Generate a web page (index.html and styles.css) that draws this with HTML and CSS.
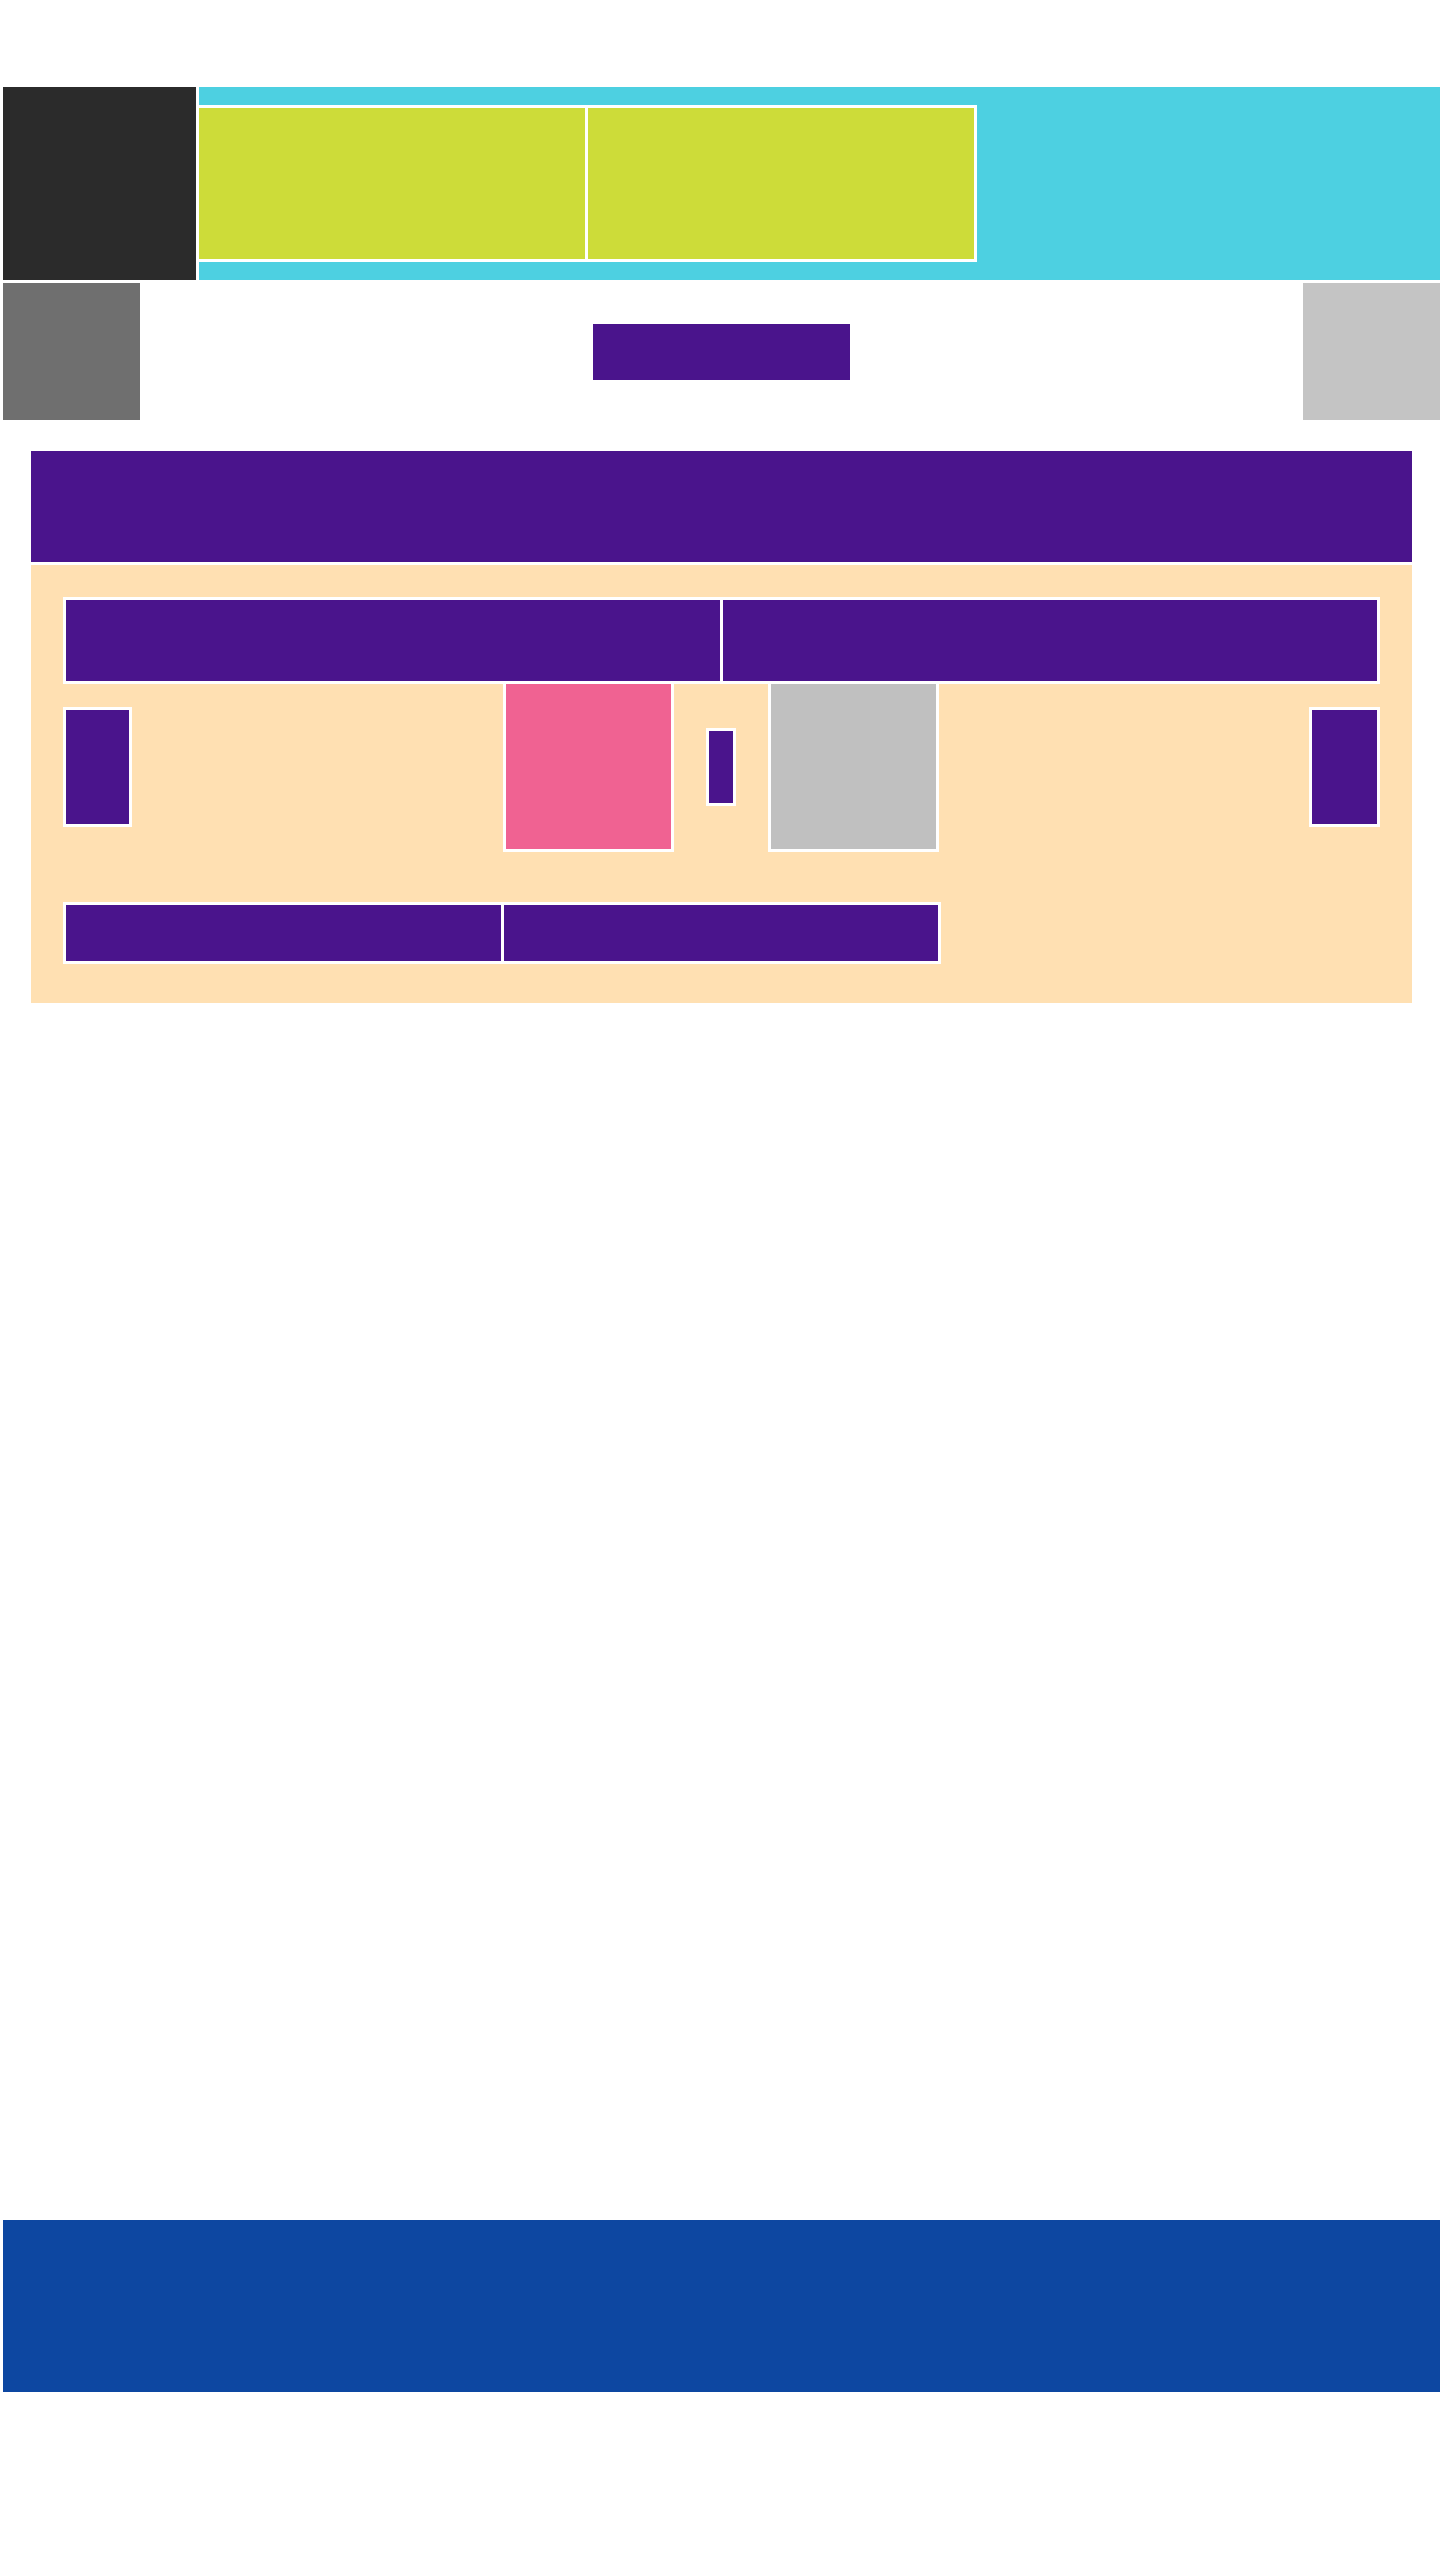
FILE: index.html
```html
<html>
<head>
    <title>Layout</title>
    <meta http-equiv="Content-Type" content="text/html; charset=utf-8" />
    <link rel="stylesheet" href="styles.css">
</head>
<body>
<div class="page">

    <header class="masthead">
        <div class="logo"></div>
        <div class="banner">
            <div class="promo"></div>
            <div class="promo"></div>
        </div>
    </header>

    <nav class="navbar">
        <div class="nav-left"></div>
        <a class="nav-btn" href="#"></a>
        <div class="nav-right"></div>
    </nav>

    <main class="content">
        <section class="panel">
            <div class="panel-head"></div>
            <div class="panel-body">
                <div class="tabs">
                    <div class="tab"></div>
                    <div class="tab"></div>
                </div>
                <div class="row">
                    <div class="side"></div>
                    <div class="group">
                        <div class="tile pink"></div>
                        <div class="pip"></div>
                        <div class="tile silver"></div>
                    </div>
                    <div class="side side-right"></div>
                </div>
                <div class="tabs tabs-short">
                    <div class="tab"></div>
                    <div class="tab"></div>
                </div>
            </div>
        </section>
    </main>

    <footer class="footer"></footer>

</div>
</body>
</html>
```
FILE: styles.css
```css
* {
    box-sizing: border-box;
}

body {
    margin: 0;
    background: #fff;
    font-family: "Liberation Sans", sans-serif;
}

.page {
    padding: 87px 0 0 3px;
}

/* top header */
.masthead {
    display: flex;
    gap: 3px;
    height: 193px;
}

.logo {
    width: 193px;
    background: #2b2b2b;
}

.banner {
    flex: 1;
    display: flex;
    padding: 18px 0;
    background: #4dd0e1;
}

.promo {
    width: 389px;
    height: 157px;
    background: #cddc39;
    border: 3px solid #fff;
    border-left: 0;
}

.promo:first-child {
    width: 392px;
    margin-left: -3px;
    border-left: 3px solid #fff;
}

/* nav */
.navbar {
    display: flex;
    justify-content: space-between;
    align-items: center;
    margin-top: 3px;
    height: 137px;
}

.nav-left, .nav-right {
    width: 137px;
    height: 137px;
}

.nav-left {
    background: #6f6f6f;
}

.nav-right {
    background: #c4c4c4;
}

.nav-btn {
    display: block;
    width: 257px;
    height: 56px;
    background: #4a148c;
}

/* main panel */
.content {
    margin: 31px 28px 0;
    min-height: 1769px;
}

.panel-head {
    height: 114px;
    background: #4a148c;
    border-bottom: 3px solid #fff;
}

.panel-body {
    padding: 32px 32px 39px;
    background: #ffe0b2;
}

.tabs {
    display: flex;
}

.tab {
    flex: 1;
    height: 87px;
    background: #4a148c;
    border: 3px solid #fff;
}

.tab + .tab {
    border-left: 0;
}

.tabs-short {
    width: 66.67%;
}

.tabs-short .tab {
    height: 62px;
}

.row {
    display: flex;
    justify-content: space-between;
    align-items: center;
    margin-top: -3px;
    margin-bottom: 50px;
}

.side {
    width: 69px;
    height: 120px;
    background: #4a148c;
    border: 3px solid #fff;
}

.side-right {
    width: 71px;
}

.group {
    display: flex;
    align-items: center;
    gap: 32px;
}

.tile {
    width: 171px;
    height: 171px;
    border: 3px solid #fff;
}

.pink {
    background: #f06292;
}

.silver {
    background: #c0c0c0;
}

.pip {
    width: 30px;
    height: 78px;
    background: #4a148c;
    border: 3px solid #fff;
}

.footer {
    height: 172px;
    background: #0d47a1;
}
```
